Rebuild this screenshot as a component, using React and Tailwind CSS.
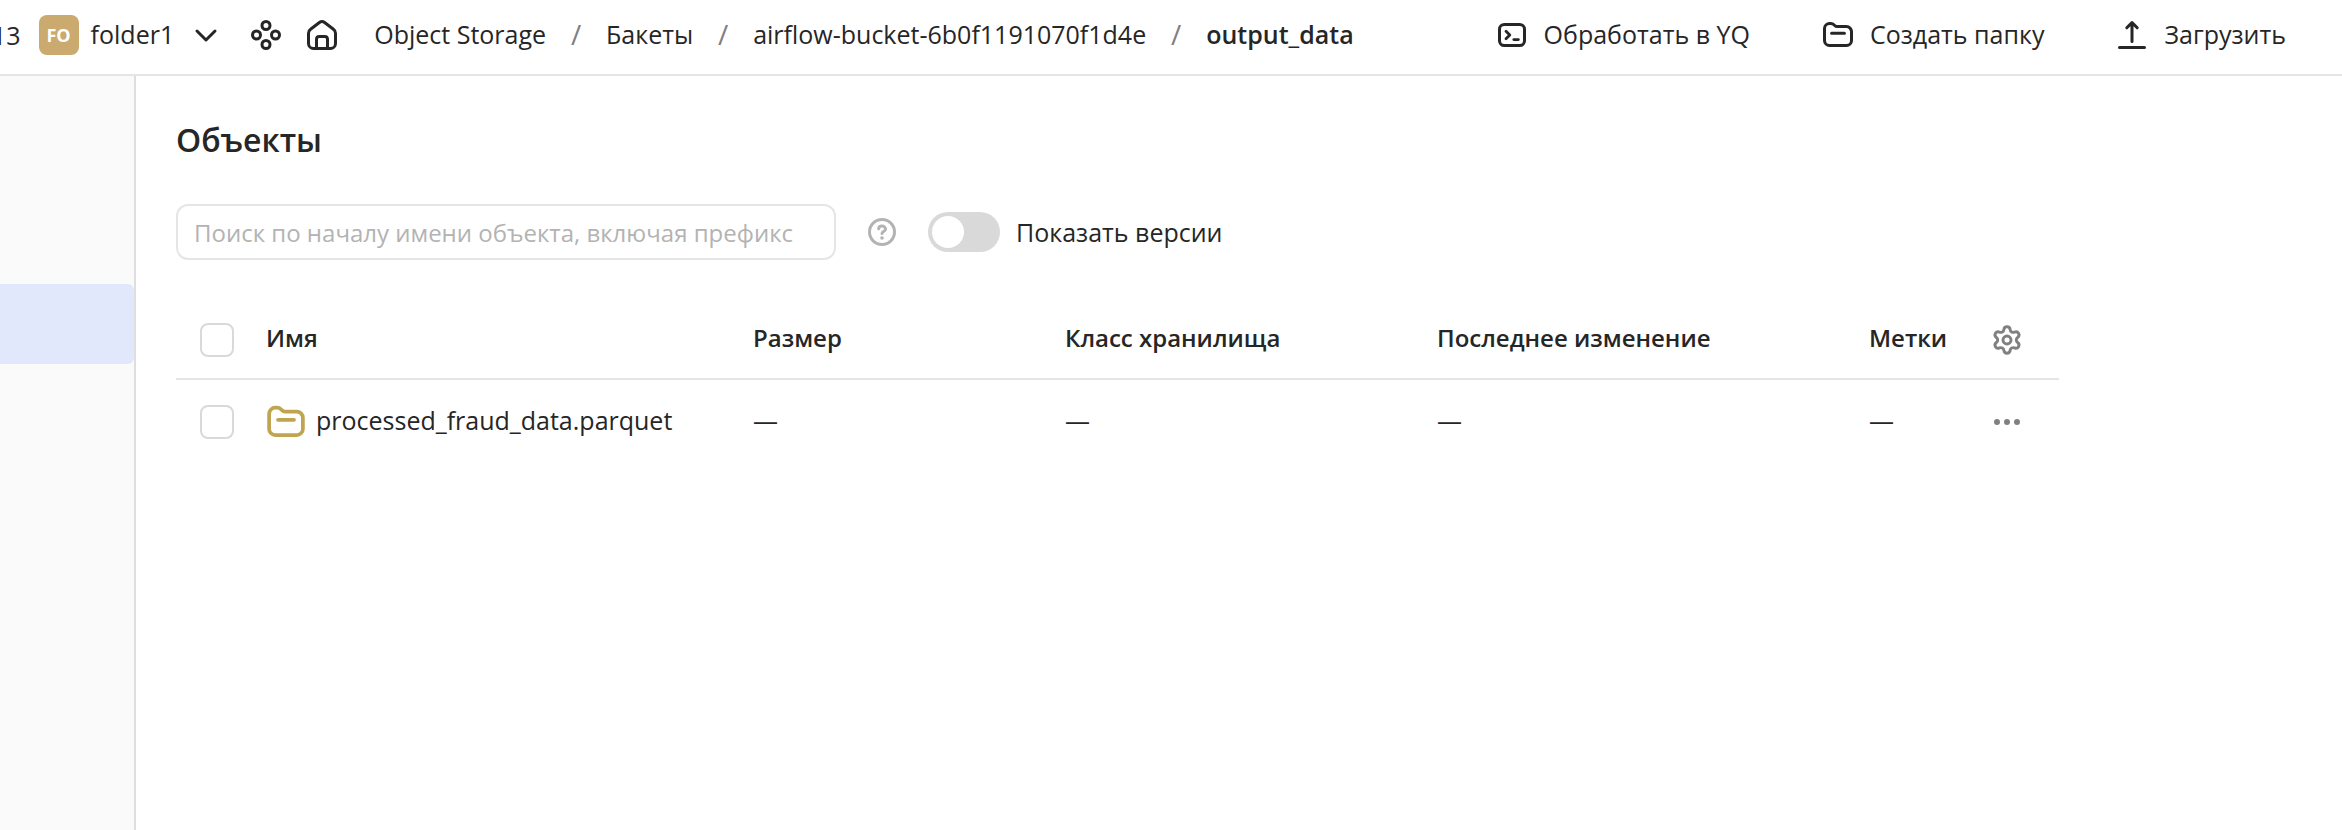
import { Fragment } from "react";
import { Settings } from "lucide-react";

function Icon({ className = "size-8", children }) {
  return (
    <svg
      viewBox="0 0 16 16"
      fill="none"
      stroke="currentColor"
      strokeWidth="1.5"
      strokeLinecap="round"
      strokeLinejoin="round"
      aria-hidden="true"
      className={"shrink-0 " + className}
    >
      {children}
    </svg>
  );
}

const ChevronDown = () => (
  <Icon>
    <path d="M3.5 6 8 10.5 12.5 6" />
  </Icon>
);

const Services = () => (
  <Icon>
    <circle cx="8" cy="3.25" r="2" />
    <circle cx="3.25" cy="8" r="2" />
    <circle cx="12.75" cy="8" r="2" />
    <circle cx="8" cy="12.75" r="2" />
  </Icon>
);

const Home = () => (
  <Icon>
    <path d="M1.25 7.15c0-.8.38-1.56 1.03-2.03L6.7 1.72a2.2 2.2 0 0 1 2.6 0l4.42 3.4c.65.47 1.03 1.23 1.03 2.03v5.1a2.5 2.5 0 0 1-2.5 2.5h-8.5a2.5 2.5 0 0 1-2.5-2.5z" />
    <path d="M5.25 14.5V10.1c0-.8.6-1.4 1.4-1.4h2.7c.8 0 1.4.6 1.4 1.4v4.4" />
  </Icon>
);

const Terminal = () => (
  <Icon>
    <rect x="1.75" y="2.75" width="12.5" height="10.5" rx="2.4" />
    <path d="M5 6.1 6.9 8 5 9.9M8.9 10.3h2.3" strokeWidth="1.4" />
  </Icon>
);

const Folder = ({ className }) => (
  <Icon className={className}>
    <path d="M1.25 4.75a2.5 2.5 0 0 1 2.5-2.5h.6c.66 0 1.3.27 1.76.74l.35.34c.3.3.7.47 1.1.47h4.69a2.5 2.5 0 0 1 2.5 2.5v4.45a2.5 2.5 0 0 1-2.5 2.5h-8.5a2.5 2.5 0 0 1-2.5-2.5z" />
    <path d="M4.8 7.1h6.4" />
  </Icon>
);

const Upload = () => (
  <Icon>
    <path d="M8 11.25V1.9M5.4 4.4 8 1.8l2.6 2.6M1.75 14.2h12.5" />
  </Icon>
);

const Question = () => (
  <Icon>
    <circle cx="8" cy="8" r="6.25" />
    <path d="M6.35 6.35C6.35 5.5 7.1 5 8 5s1.75.6 1.75 1.45c0 .65-.45 1-.95 1.3-.45.27-.8.5-.8.95" />
    <circle cx="8" cy="11" r=".9" fill="currentColor" stroke="none" />
  </Icon>
);

const Dots = () => (
  <Icon>
    <g fill="currentColor" stroke="none">
      <circle cx="3" cy="8" r="1.5" />
      <circle cx="8" cy="8" r="1.5" />
      <circle cx="13" cy="8" r="1.5" />
    </g>
  </Icon>
);

const crumbs = ["Object Storage", "Бакеты", "airflow-bucket-6b0f1191070f1d4e"];

const actions = [
  { label: "Обработать в YQ", icon: <Terminal /> },
  { label: "Создать папку", icon: <Folder /> },
  { label: "Загрузить", icon: <Upload /> },
];

const columns = ["Имя", "Размер", "Класс хранилища", "Последнее изменение", "Метки"];

const checkbox =
  "block size-[34px] appearance-none rounded-lg border-2 border-[#d9d9d9] bg-white checked:bg-[#5282ff]";

function Header() {
  return (
    <header className="flex h-[76px] shrink-0 items-center justify-between overflow-hidden border-b-2 border-[#e5e5e5] pr-14 pb-1 whitespace-nowrap">
      <div className="flex items-center">
        <span className="-ml-2">13</span>
        <button type="button" className="ml-[18px] flex items-center gap-3">
          <span className="flex size-10 items-center justify-center rounded-lg bg-[#cbaa70] text-[18px] font-bold text-white">
            FO
          </span>
          <span className="pb-0.5">folder1</span>
          <span className="ml-1 flex">
            <ChevronDown />
          </span>
        </button>
        <button type="button" aria-label="Сервисы" className="ml-7">
          <Services />
        </button>
        <a href="#" aria-label="Главная" className="ml-6">
          <Home />
        </a>
        <nav className="ml-9 flex items-center pb-0.5">
          {crumbs.map((c) => (
            <Fragment key={c}>
              <a href="#">{c}</a>
              <span className="mx-6 w-3 text-center text-[28px] text-[#808080]">/</span>
            </Fragment>
          ))}
          <span className="font-semibold">output_data</span>
        </nav>
      </div>
      <div className="flex items-center gap-[72px]">
        {actions.map((a) => (
          <button key={a.label} type="button" className="flex items-center gap-4">
            {a.icon}
            <span className="pb-0.5">{a.label}</span>
          </button>
        ))}
      </div>
    </header>
  );
}

function ObjectsTable() {
  return (
    <table className="mt-10 w-full max-w-[1883px] table-fixed text-left">
      <colgroup>
        <col className="w-[90px]" />
        <col className="w-[487px]" />
        <col className="w-[312px]" />
        <col className="w-[372px]" />
        <col className="w-[432px]" />
        <col className="w-[86px]" />
        <col className="w-[104px]" />
      </colgroup>
      <thead>
        <tr className="h-[79px] border-b-2 border-[#e5e5e5] text-[24px]">
          <th className="pt-0.5 pl-6">
            <input type="checkbox" aria-label="Выбрать все" className={checkbox} />
          </th>
          {columns.map((c) => (
            <th key={c} className="pb-0.5 font-semibold">
              {c}
            </th>
          ))}
          <th className="pt-0.5">
            <button
              type="button"
              aria-label="Настройки таблицы"
              className="mx-auto block text-[#808080]"
            >
              <Settings size={32} strokeWidth={2.2} />
            </button>
          </th>
        </tr>
      </thead>
      <tbody>
        <tr className="h-[84px]">
          <td className="pl-6">
            <input
              type="checkbox"
              aria-label="Выбрать processed_fraud_data.parquet"
              className={checkbox}
            />
          </td>
          <td>
            <a href="#" className="flex items-center gap-[10px]">
              <Folder className="size-10 text-[#bfa550]" />
              <span className="pb-1">processed_fraud_data.parquet</span>
            </a>
          </td>
          <td className="pb-1">—</td>
          <td className="pb-1">—</td>
          <td className="pb-1">—</td>
          <td className="pb-1">—</td>
          <td>
            <button type="button" aria-label="Действия" className="mx-auto block text-[#808080]">
              <Dots />
            </button>
          </td>
        </tr>
      </tbody>
    </table>
  );
}

export default function App() {
  return (
    <div className="flex min-h-screen flex-col bg-white font-['Open_Sans','Noto_Sans',sans-serif] text-[25px] leading-8 text-[#262626]">
      <Header />
      <div className="flex grow">
        <aside className="w-[136px] shrink-0 border-r-2 border-[#dedede] bg-[#fafafa] pt-52">
          <a href="#" aria-label="Объекты" className="block h-20 rounded-r-md bg-[#e2e8fb]" />
        </aside>
        <main className="min-w-0 grow px-10 pt-11">
          <h1 className="text-[32px] leading-10 font-semibold">Объекты</h1>
          <div className="mt-11 flex items-center">
            <input
              type="text"
              aria-label="Поиск"
              placeholder="Поиск по началу имени объекта, включая префикс"
              className="h-14 w-[660px] rounded-xl border-2 border-[#e5e5e5] px-4 text-[24px] placeholder:text-[#b3b3b3]"
            />
            <button type="button" aria-label="Справка" className="ml-[30px] text-[#b3b3b3]">
              <Question />
            </button>
            <label className="ml-[30px] flex items-center gap-4">
              <input
                type="checkbox"
                role="switch"
                className="flex h-10 w-[72px] appearance-none items-center rounded-full bg-[#d9d9d9] px-1 before:size-8 before:rounded-full before:bg-white checked:justify-end checked:bg-[#5282ff]"
              />
              Показать версии
            </label>
          </div>
          <ObjectsTable />
        </main>
      </div>
    </div>
  );
}
